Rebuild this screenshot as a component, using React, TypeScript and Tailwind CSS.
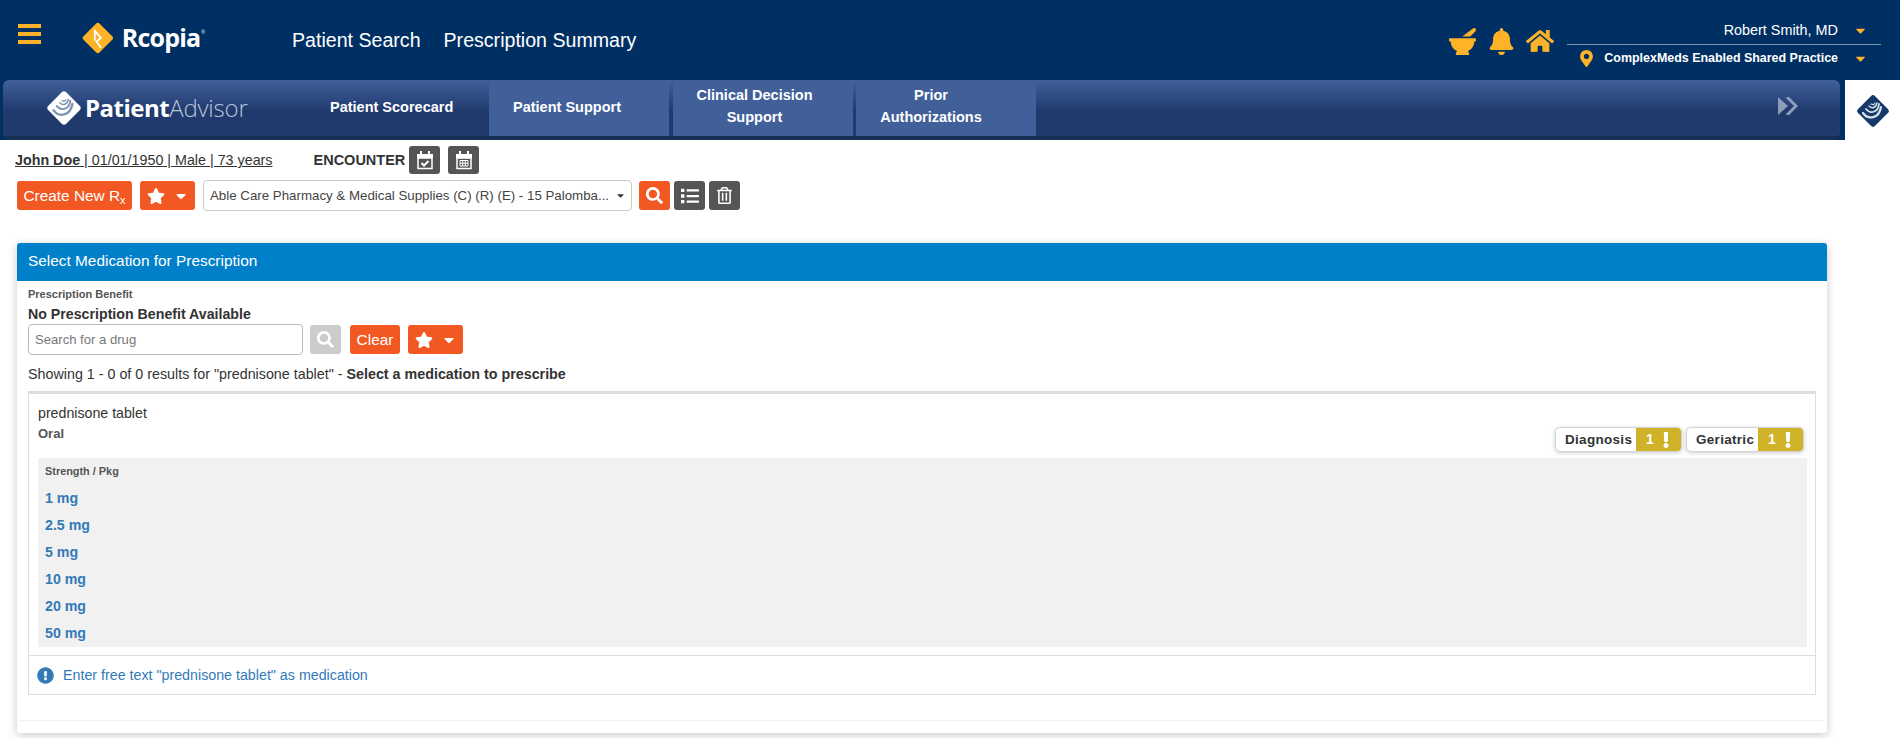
import { FaBell, FaCaretDown, FaExclamation, FaExclamationCircle, FaHome, FaList, FaMapMarkerAlt, FaMortarPestle, FaRegTrashAlt, FaSearch, FaStar } from "react-icons/fa";

const doses = ["1 mg", "2.5 mg", "5 mg", "10 mg", "20 mg", "50 mg"];

function RcopiaMark() {
  return (
    <svg width="36" height="36" viewBox="0 0 36 36">
      <rect x="5" y="5" width="26" height="26" rx="3" fill="#fdb227" transform="rotate(45 18 18)" />
      <path d="M14.5 21V10l7 8-5 4 5 7" fill="none" stroke="#fff" strokeWidth="2" />
    </svg>
  );
}

function AdvisorMark({ size, bg, fg }: { size: number; bg: string; fg: string }) {
  return (
    <svg width={size} height={size} viewBox="0 0 36 36">
      <rect x="6" y="6" width="24" height="24" rx="3" fill={bg} transform="rotate(45 18 18)" />
      <g fill="none" stroke={fg} strokeLinecap="round">
        <path d="M8 20c5 7 16 6 18-6" strokeWidth="2.2" />
        <path d="M11 16c4 5 12 4 13-5" strokeWidth="1.8" />
        <path d="M14 13c3 3 7 2 8-3" strokeWidth="1.4" />
        <path d="M16 11c2 1 3 1 4-1" strokeWidth="1.1" />
      </g>
    </svg>
  );
}

function CalendarIcon({ grid }: { grid?: boolean }) {
  return (
    <svg width="18" height="20" viewBox="0 0 18 20" fill="none">
      <path d="M1 4h3V1h2v3h6V1h2v3h3v4H1z" fill="#fff" />
      <path d="M2 8h14v10.500H2z" stroke="#fff" strokeWidth="1.500" />
      {grid ? (
        <path d="M5 10.500h8v5.500H5zM7.700 10.500v5.500M10.300 10.500v5.500M5 13.200h8" stroke="#fff" strokeWidth="1" />
      ) : (
        <path d="M5.500 13l2.500 2.500 4.500-4.500" stroke="#fff" strokeWidth="2" />
      )}
    </svg>
  );
}

function OrangeButton({ children, className }: { children: React.ReactNode; className: string }) {
  return <button className={`flex items-center justify-center rounded-[3px] bg-[#f15822] text-white ${className}`}>{children}</button>;
}

function StarMenu() {
  return (
    <OrangeButton className="h-[29px] w-[55px] gap-[8px]">
      <FaStar size={18} />
      <FaCaretDown size={16} />
    </OrangeButton>
  );
}

function DarkButton({ children, className }: { children: React.ReactNode; className: string }) {
  return <button className={`flex w-[31px] items-center justify-center rounded-[3px] bg-[#555555] text-white ${className}`}>{children}</button>;
}

function Badge({ label, width }: { label: string; width: string }) {
  return (
    <div className={`flex h-[25px] overflow-hidden rounded-[5px] border border-[#d4d4d4] bg-white shadow-[0_1px_4px_rgba(0,0,0,0.2)] ${width}`}>
      <span className="flex-1 pl-[9px] text-[13.500px] leading-[24px] font-bold tracking-[0.3px] text-[#333]">{label}</span>
      <span className="flex w-[45px] items-center justify-center gap-[4px] bg-[#cfb227] pl-[3px] text-[14px] font-bold text-white">
        1
        <FaExclamation size={16} />
      </span>
    </div>
  );
}

export default function App() {
  return (
    <div className="min-h-[738px] bg-white font-['Liberation_Sans',Arial,sans-serif] text-[#333]">
      {/* Top nav */}
      <div className="bg-[#003063]">
        <div className="flex h-[80px]">
          <div className="mt-[24px] flex h-[20px] w-[23px] ml-[18px] flex-col justify-between">
            <div className="h-[4px] bg-[#fdb227]" />
            <div className="h-[4px] bg-[#fdb227]" />
            <div className="h-[4px] bg-[#fdb227]" />
          </div>
          <div className="mt-[20px] ml-[41px] flex h-[36px] w-[123px] items-center gap-[8px]">
            <RcopiaMark />
            <span className="font-['Open_Sans',sans-serif] text-[25px] font-bold tracking-[-0.8px] text-white">Rcopia</span>
            <span className="-ml-[7px] mb-[10px] text-[5px] text-white">®</span>
          </div>
          <div className="mt-[29px] ml-[87px] flex h-[22px] gap-[23px] text-[19.600px] leading-[22px] text-white">
            <span>Patient Search</span>
            <span>Prescription Summary</span>
          </div>
          <div className="mt-[26px] ml-auto flex h-[30px] items-center text-[#fdb227]">
            <FaMortarPestle size={27} />
            <FaBell size={27} className="ml-[12px]" />
            <FaHome size={28} className="ml-[11px]" />
          </div>
          <div className="mt-[19px] mr-[19px] ml-[13px] w-[314px]">
            <div className="flex h-[26px] items-center justify-end border-b border-[#7f97b1] pb-[2px] text-[14.400px] text-white">
              <span>Robert Smith, MD</span>
              <FaCaretDown size={15} className="mr-[13px] ml-[15px] text-[#fdb227]" />
            </div>
            <div className="flex h-[27px] items-center justify-end text-white">
              <FaMapMarkerAlt size={17} className="text-[#fdb227]" />
              <span className="ml-[9px] text-[12.450px] font-bold">ComplexMeds Enabled Shared Practice</span>
              <FaCaretDown size={15} className="mr-[13px] ml-[15px] text-[#fdb227]" />
            </div>
          </div>
        </div>

        {/* Patient Advisor tab bar */}
        <div className="flex h-[60px]">
          <div className="ml-[3px] flex h-[60px] w-[1837px] rounded-t-[6px] rounded-b-[6px] border-b-[4px] border-[#162f55] bg-gradient-to-b from-[#41609a] to-[#203a6e] to-[55%]">
            <div className="flex h-[56px] w-[327px] items-center pl-[42px]">
              <AdvisorMark size={38} bg="#ffffff" fg="#7f93b5" />
              <span className="ml-[2px] font-['Open_Sans',sans-serif] text-[24px] font-bold tracking-[-0.5px] text-white">Patient</span>
              <span className="font-['Open_Sans',sans-serif] text-[24px] font-light tracking-[-0.2px] text-[#b7c3d8]">Advisor</span>
            </div>
            <div className="flex h-[56px] w-[159px] items-center text-[14.500px] font-bold text-white">Patient Scorecard</div>
            <div className="flex h-[56px] w-[180px] items-center justify-center bg-[#41609a] pr-[24px] text-[14.500px] font-bold text-white">Patient Support</div>
            <div className="ml-[4px] flex h-[56px] w-[180px] items-center justify-center bg-[#41609a] pr-[17px] pb-[4px] text-center text-[14.500px] leading-[22px] font-bold text-white">
              Clinical Decision<br />Support
            </div>
            <div className="ml-[3px] flex h-[56px] w-[180px] items-center justify-center bg-[#41609a] pr-[30px] pb-[4px] text-center text-[14.500px] leading-[22px] font-bold text-white">
              Prior<br />Authorizations
            </div>
            <svg width="20" height="18" viewBox="0 0 20 18" className="mt-[17px] ml-[742px]">
              <path d="M0 0l10 9-10 9z" fill="#8c9cba" />
              <path d="M9 0l9 9-9 9" fill="none" stroke="#8c9cba" strokeWidth="3" />
            </svg>
          </div>
          <div className="ml-[5px] flex h-[61px] w-[55px] items-center justify-center bg-white">
            <AdvisorMark size={36} bg="#143a6b" fg="#dbe2ec" />
          </div>
        </div>
      </div>

      {/* Patient row */}
      <div className="ml-[15px] flex h-[34px] items-center pt-[6px]">
        <span className="pt-[2px] text-[14.300px] underline">
          <b>John Doe</b> | 01/01/1950 | Male | 73 years
        </span>
        <span className="ml-[41px] pt-[2px] text-[14.500px] font-bold">ENCOUNTER</span>
        <DarkButton className="ml-[4px] h-[28px]"><CalendarIcon /></DarkButton>
        <DarkButton className="ml-[8px] h-[28px]"><CalendarIcon grid /></DarkButton>
      </div>

      {/* Rx toolbar */}
      <div className="mt-[6px] ml-[17px] flex h-[31px] items-center">
        <OrangeButton className="h-[29px] w-[115px] text-[15.400px]">
          <span>Create New R<sub className="text-[11px]">x</sub></span>
        </OrangeButton>
        <div className="ml-[8px]"><StarMenu /></div>
        <div className="ml-[8px] flex h-[31px] w-[429px] items-center justify-between rounded-[4px] border border-[#ccc] bg-white pr-[5px] pl-[6px] text-[13.300px] text-[#444]">
          <span>Able Care Pharmacy &amp; Medical Supplies (C) (R) (E) - 15 Palomba...</span>
          <FaCaretDown size={11} className="text-[#333]" />
        </div>
        <OrangeButton className="ml-[7px] h-[29px] w-[31px]"><FaSearch size={17} /></OrangeButton>
        <DarkButton className="ml-[4px] h-[29px]"><FaList size={18} /></DarkButton>
        <DarkButton className="ml-[4px] h-[29px]"><FaRegTrashAlt size={17} /></DarkButton>
      </div>

      {/* Select medication panel */}
      <div className="mt-[32px] ml-[17px] h-[490px] w-[1810px] rounded-[3px] bg-white shadow-[0_2px_10px_rgba(0,0,0,0.22)]">
        <div className="flex h-[38px] items-center rounded-t-[3px] bg-[#0080c9] pb-[2px] pl-[11px] text-[15.400px] text-white">Select Medication for Prescription</div>
        <div className="px-[11px]">
          <div className="mt-[7px] text-[11px] leading-[12px] font-bold text-[#555]">Prescription Benefit</div>
          <div className="mt-[7px] text-[14.200px] leading-[15px] font-bold">No Prescription Benefit Available</div>
          <div className="mt-[2px] flex h-[31px] items-center">
            <div className="flex h-[31px] w-[275px] items-center rounded-[4px] border border-[#bbb] pl-[6px] text-[13.100px] text-[#777]">Search for a drug</div>
            <button className="ml-[7px] flex h-[29px] w-[31px] items-center justify-center rounded-[3px] bg-[#cccccc] text-white"><FaSearch size={17} /></button>
            <OrangeButton className="ml-[9px] h-[29px] w-[50px] text-[15.400px]">Clear</OrangeButton>
            <div className="ml-[8px]"><StarMenu /></div>
          </div>
          <div className="mt-[11px] text-[14.300px] leading-[16px]">
            Showing 1 - 0 of 0 results for "prednisone tablet" - <b>Select a medication to prescribe</b>
          </div>

          {/* Result box */}
          <div className="mt-[9px] h-[304px] w-[1788px] border-x border-b border-t-[3px] border-[#dddddd]">
            <div className="relative h-[261px] px-[9px]">
              <div className="pt-[11px] text-[14.200px] leading-[16px]">prednisone tablet</div>
              <div className="mt-[5px] text-[13px] leading-[16px] font-bold text-[#555]">Oral</div>
              <div className="absolute top-[33px] right-[11px] flex gap-[4px]">
                <Badge label="Diagnosis" width="w-[127px]" />
                <Badge label="Geriatric" width="w-[118px]" />
              </div>
              <div className="mt-[16px] h-[189px] w-[1769px] bg-[#f1f1f1] pl-[7px]">
                <div className="pt-[7px] text-[10.900px] leading-[12px] font-bold text-[#555]">Strength / Pkg</div>
                <div className="mt-[8px]">
                  {doses.map((dose) => (
                    <div key={dose} className="h-[27px] text-[14.200px] leading-[27px] font-bold text-[#337ab7]">{dose}</div>
                  ))}
                </div>
              </div>
            </div>
            <div className="flex h-[40px] items-center border-t border-[#dddddd] pl-[8px] text-[14.250px] text-[#337ab7]">
              <FaExclamationCircle size={17} />
              <span className="ml-[9px]">Enter free text "prednisone tablet" as medication</span>
            </div>
          </div>
          <div className="mt-[25px] -mr-[8px] -ml-[8px] border-t border-[#f0f0f0]" />
        </div>
      </div>
    </div>
  );
}
